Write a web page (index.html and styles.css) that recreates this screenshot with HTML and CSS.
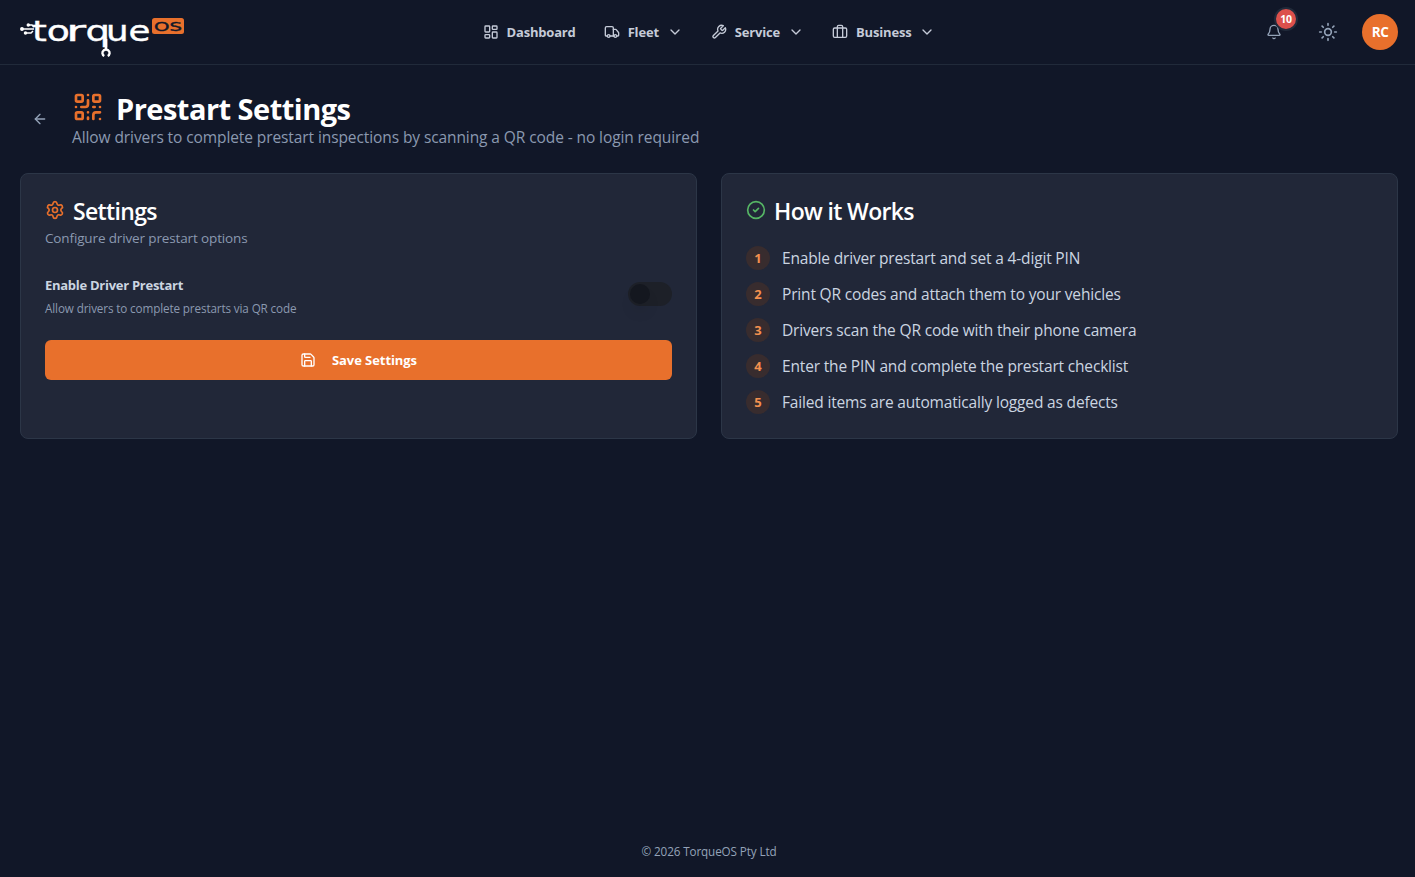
FILE: index.html
```html
<!DOCTYPE html>
<html lang="en">
<head>
    <meta charset="UTF-8">
    <meta name="viewport" content="width=device-width, initial-scale=1.0">
    <title>Prestart Settings - TorqueOS</title>
    <link rel="stylesheet" href="styles.css">
</head>
<body>
    <header class="topbar">
        <a class="logo" href="#" aria-label="TorqueOS">
            <svg width="166" height="44" viewBox="0 0 166 44">
                <g class="logo-lines">
                    <path d="M2 15h12M8 11h4l2 2M5 19h6l2-2"/>
                    <circle cx="2" cy="15" r="1.2"/>
                    <circle cx="8.3" cy="11" r="1"/>
                    <circle cx="5.5" cy="19" r="1"/>
                    <path class="logo-stem" d="M86 25v10.500"/>
                    <path class="logo-wrench" d="M84.300 42a3.300 3.300 0 0 1-.6-5.600l2.300-.9 2.300.9a3.300 3.300 0 0 1-.6 5.600"/>
                </g>
                <g class="logo-text">
                    <text x="12" y="26.500" textLength="38" lengthAdjust="spacingAndGlyphs">to</text>
                    <text x="46" y="26.500" textLength="20" lengthAdjust="spacingAndGlyphs">r</text>
                    <text x="65.500" y="26.500" textLength="24.600" lengthAdjust="spacingAndGlyphs">q</text>
                    <text x="86" y="26.500" textLength="44.500" lengthAdjust="spacingAndGlyphs">ue</text>
                </g>
                <rect class="logo-badge" x="132" y="4" width="32" height="16" rx="2.500"/>
                <text class="logo-os" x="134" y="16.700" textLength="28" lengthAdjust="spacingAndGlyphs">OS</text>
            </svg>
        </a>

        <nav class="nav">
            <a class="nav-item" href="#">
                <svg class="icon" viewBox="0 0 24 24"><rect width="7" height="9" x="3" y="3" rx="1"/><rect width="7" height="5" x="14" y="3" rx="1"/><rect width="7" height="9" x="14" y="12" rx="1"/><rect width="7" height="5" x="3" y="16" rx="1"/></svg>
                <span>Dashboard</span>
            </a>
            <a class="nav-item" href="#">
                <svg class="icon" viewBox="0 0 24 24"><path d="M14 18V6a2 2 0 0 0-2-2H4a2 2 0 0 0-2 2v11a1 1 0 0 0 1 1h2"/><path d="M15 18H9"/><path d="M19 18h2a1 1 0 0 0 1-1v-3.650a1 1 0 0 0-.22-.624l-3.480-4.350A1 1 0 0 0 17.520 8H14"/><circle cx="17" cy="18" r="2"/><circle cx="7" cy="18" r="2"/></svg>
                <span>Fleet</span>
                <svg class="icon" viewBox="0 0 24 24"><path d="m6 9 6 6 6-6"/></svg>
            </a>
            <a class="nav-item" href="#">
                <svg class="icon" viewBox="0 0 24 24"><path d="M14.700 6.300a1 1 0 0 0 0 1.400l1.600 1.600a1 1 0 0 0 1.400 0l3.770-3.770a6 6 0 0 1-7.940 7.940l-6.910 6.910a2.120 2.120 0 0 1-3-3l6.910-6.910a6 6 0 0 1 7.940-7.940l-3.760 3.760z"/></svg>
                <span>Service</span>
                <svg class="icon" viewBox="0 0 24 24"><path d="m6 9 6 6 6-6"/></svg>
            </a>
            <a class="nav-item" href="#">
                <svg class="icon" viewBox="0 0 24 24"><rect width="20" height="14" x="2" y="6" rx="2"/><path d="M16 20V4a2 2 0 0 0-2-2h-4a2 2 0 0 0-2 2v16"/></svg>
                <span>Business</span>
                <svg class="icon" viewBox="0 0 24 24"><path d="m6 9 6 6 6-6"/></svg>
            </a>
        </nav>

        <div class="actions">
            <button class="icon-btn" aria-label="Notifications">
                <svg class="icon" viewBox="0 0 24 24"><path d="M10.268 21a2 2 0 0 0 3.464 0"/><path d="M3.262 15.326A1 1 0 0 0 4 17h16a1 1 0 0 0 .740-1.673C19.410 13.956 18 12.499 18 8A6 6 0 0 0 6 8c0 4.499-1.411 5.956-2.738 7.326"/></svg>
                <span class="count">10</span>
            </button>
            <button class="icon-btn" aria-label="Toggle theme">
                <svg class="icon icon-md" viewBox="0 0 24 24"><circle cx="12" cy="12" r="4"/><path d="M12 2v2M12 20v2M4.930 4.930l1.410 1.410M17.660 17.660l1.410 1.410M2 12h2M20 12h2M6.340 17.660l-1.410 1.410M19.070 4.930l-1.410 1.410"/></svg>
            </button>
            <span class="avatar">RC</span>
        </div>
    </header>

    <main class="page">
        <div class="page-head">
            <button class="icon-btn" aria-label="Back">
                <svg class="icon" viewBox="0 0 24 24"><path d="m12 19-7-7 7-7"/><path d="M19 12H5"/></svg>
            </button>
            <div>
                <h1>
                    <svg class="icon icon-lg orange" viewBox="0 0 24 24"><rect width="5" height="5" x="3" y="3" rx="1"/><rect width="5" height="5" x="16" y="3" rx="1"/><rect width="5" height="5" x="3" y="16" rx="1"/><path d="M21 16h-3a2 2 0 0 0-2 2v3M21 21v.010M12 7v3a2 2 0 0 1-2 2H7M3 12h.010M12 3h.010M12 16v.010M16 12h1M21 12v.010M12 21v-1"/></svg>
                    <span>Prestart Settings</span>
                </h1>
                <p class="subtitle">Allow drivers to complete prestart inspections by scanning a QR code - no login required</p>
            </div>
        </div>

        <div class="cards">
            <section class="card">
                <h2>
                    <svg class="icon icon-md orange" viewBox="0 0 24 24"><path d="M9.671 4.136a2.340 2.340 0 0 1 4.659 0 2.340 2.340 0 0 0 3.319 1.915 2.340 2.340 0 0 1 2.330 4.033 2.340 2.340 0 0 0 0 3.831 2.340 2.340 0 0 1-2.330 4.033 2.340 2.340 0 0 0-3.319 1.915 2.340 2.340 0 0 1-4.659 0 2.340 2.340 0 0 0-3.320-1.915 2.340 2.340 0 0 1-2.330-4.033 2.340 2.340 0 0 0 0-3.831A2.340 2.340 0 0 1 6.350 6.051a2.340 2.340 0 0 0 3.319-1.915"/><circle cx="12" cy="12" r="3"/></svg>
                    <span>Settings</span>
                </h2>
                <p class="card-desc">Configure driver prestart options</p>
                <div class="setting">
                    <div>
                        <div class="setting-label">Enable Driver Prestart</div>
                        <p class="setting-help">Allow drivers to complete prestarts via QR code</p>
                    </div>
                    <button class="switch" role="switch" aria-checked="false" aria-label="Enable Driver Prestart"><span class="thumb"></span></button>
                </div>
                <button class="save">
                    <svg class="icon" viewBox="0 0 24 24"><path d="M15.200 3a2 2 0 0 1 1.400.600l3.800 3.800a2 2 0 0 1 .600 1.400V19a2 2 0 0 1-2 2H5a2 2 0 0 1-2-2V5a2 2 0 0 1 2-2z"/><path d="M17 21v-7a1 1 0 0 0-1-1H8a1 1 0 0 0-1 1v7"/><path d="M7 3v4a1 1 0 0 0 1 1h7"/></svg>
                    <span>Save Settings</span>
                </button>
            </section>

            <section class="card">
                <h2>
                    <svg class="icon icon-md green" viewBox="0 0 24 24"><circle cx="12" cy="12" r="10"/><path d="m9 12 2 2 4-4"/></svg>
                    <span>How it Works</span>
                </h2>
                <ol class="steps">
                    <li><span class="num">1</span><span>Enable driver prestart and set a 4-digit PIN</span></li>
                    <li><span class="num">2</span><span>Print QR codes and attach them to your vehicles</span></li>
                    <li><span class="num">3</span><span>Drivers scan the QR code with their phone camera</span></li>
                    <li><span class="num">4</span><span>Enter the PIN and complete the prestart checklist</span></li>
                    <li><span class="num">5</span><span>Failed items are automatically logged as defects</span></li>
                </ol>
            </section>
        </div>
    </main>

    <footer class="footer">© 2026 TorqueOS Pty Ltd</footer>
</body>
</html>
```

FILE: styles.css
```css
* {
    box-sizing: border-box;
    margin: 0;
    padding: 0;
}
body {
    min-height: 100vh;
    display: flex;
    flex-direction: column;
    background: #111728;
    color: #cbd5e1;
    font-family: "Segoe UI", "Open Sans", "Noto Sans", sans-serif;
    font-size: 15.5px;
    line-height: 24px;
    letter-spacing: -0.011em;
}
a {
    color: inherit;
    text-decoration: none;
}
button {
    border: none;
    background: none;
    font: inherit;
    color: inherit;
    letter-spacing: inherit;
    cursor: pointer;
}
.icon {
    width: 16px;
    height: 16px;
    flex: none;
    fill: none;
    stroke: currentColor;
    stroke-width: 2;
    stroke-linecap: round;
    stroke-linejoin: round;
}
.icon-md {
    width: 20px;
    height: 20px;
}
.icon-lg {
    width: 32px;
    height: 32px;
}
.orange {
    color: #e8702c;
}
.green {
    color: #56b665;
}

/* header */
.topbar {
    height: 65px;
    padding: 0 17px 0 20px;
    display: grid;
    grid-template-columns: 1fr auto 1fr;
    align-items: center;
    border-bottom: 1px solid #212a3a;
}
.logo svg {
    display: block;
    margin-top: 8px;
}
.logo-lines {
    fill: #fff;
    stroke: #fff;
    stroke-width: 1.5;
}
.logo-lines path {
    fill: none;
    stroke-width: 1.5;
}
.logo-lines .logo-stem {
    stroke-width: 2.6;
}
.logo-lines .logo-wrench {
    stroke-width: 2.4;
}
.logo-text {
    font: 28.5px "DejaVu Sans", sans-serif;
    letter-spacing: 0;
    fill: #fff;
    stroke: #fff;
    stroke-width: 0.4;
}
.logo-badge {
    fill: #e8702c;
}
.logo-os {
    font: 13px "DejaVu Sans", sans-serif;
    letter-spacing: 0;
    fill: #111728;
    stroke: #111728;
    stroke-width: 0.4;
}
.nav {
    display: flex;
    gap: 28px;
}
.nav-item {
    display: flex;
    align-items: center;
    gap: 8px;
    font-size: 13px;
    font-weight: 700;
    line-height: 20px;
    letter-spacing: -0.014em;
    color: #c5cbd8;
}
.actions {
    display: flex;
    align-items: center;
    justify-content: flex-end;
    gap: 14px;
}
.icon-btn {
    position: relative;
    width: 40px;
    height: 40px;
    flex: none;
    display: flex;
    align-items: center;
    justify-content: center;
    color: #94a3b8;
}
.count {
    position: absolute;
    top: -5px;
    right: -4px;
    width: 24px;
    height: 24px;
    border: 2px solid #212a3a;
    border-radius: 50%;
    background: #dc504c;
    color: #fff;
    font-size: 10.5px;
    font-weight: 700;
    line-height: 21px;
    text-align: center;
}
.avatar {
    width: 36px;
    height: 36px;
    border-radius: 50%;
    background: #e8702c;
    color: #fff;
    font-size: 13.5px;
    font-weight: 700;
    line-height: 36px;
    letter-spacing: -0.04em;
    text-align: center;
}

/* page */
.page {
    flex: 1;
    padding: 24px 17px 24px 20px;
}
.page-head {
    display: flex;
    align-items: center;
    gap: 12px;
    margin-bottom: 24px;
}
h1 {
    display: flex;
    align-items: center;
    gap: 12px;
    height: 36px;
    color: #fff;
    font-size: 29px;
    font-weight: 700;
    line-height: 36px;
    letter-spacing: -0.018em;
}
h1 span {
    padding-top: 3px;
}
.subtitle {
    color: #8b99b0;
    letter-spacing: -0.006em;
}
.cards {
    display: grid;
    grid-template-columns: 1fr 1fr;
    gap: 24px;
}
.card {
    padding: 24px;
    border: 1px solid #2c3647;
    border-radius: 8px;
    background: #212738;
}
h2 {
    display: flex;
    align-items: center;
    gap: 8px;
    height: 24px;
    color: #fff;
    font-size: 23px;
    font-weight: 600;
    line-height: 24px;
    letter-spacing: -0.028em;
}
h2 span {
    padding-top: 2px;
}
.card-desc {
    margin-top: 6px;
    color: #8b99b0;
    font-size: 13.5px;
    line-height: 20px;
    letter-spacing: -0.01em;
}
.setting {
    display: flex;
    align-items: center;
    justify-content: space-between;
    height: 44px;
    margin: 24px 0;
}
.setting-label {
    padding-top: 3px;
    font-size: 13px;
    font-weight: 700;
    line-height: 20px;
    letter-spacing: -0.021em;
}
.setting-help {
    margin-top: 5px;
    color: #8b99b0;
    font-size: 11.7px;
    line-height: 16px;
    letter-spacing: -0.011em;
}
.switch {
    width: 44px;
    height: 24px;
    padding: 2px;
    border-radius: 12px;
    background: #1d2028;
}
.thumb {
    display: block;
    width: 20px;
    height: 20px;
    border-radius: 50%;
    background: #14171f;
    box-shadow: 0 10px 15px -3px rgba(0, 0, 0, 0.1);
}
.save {
    width: 100%;
    height: 40px;
    display: flex;
    align-items: center;
    justify-content: center;
    gap: 16px;
    border-radius: 6px;
    background: #e8702c;
    color: #fff;
    font-size: 13px;
    font-weight: 700;
    letter-spacing: -0.005em;
}
.steps {
    display: grid;
    gap: 12px;
    margin-top: 24px;
    list-style: none;
}
.steps li {
    display: flex;
    gap: 12px;
}
.num {
    width: 24px;
    height: 24px;
    border-radius: 50%;
    background: #382c2e;
    color: #f3904f;
    font-size: 13px;
    font-weight: 700;
    text-align: center;
}
.footer {
    padding: 16px 0 18px 3px;
    color: #94a3b8;
    font-size: 11.7px;
    line-height: 16px;
    letter-spacing: -0.01em;
    text-align: center;
}
```
